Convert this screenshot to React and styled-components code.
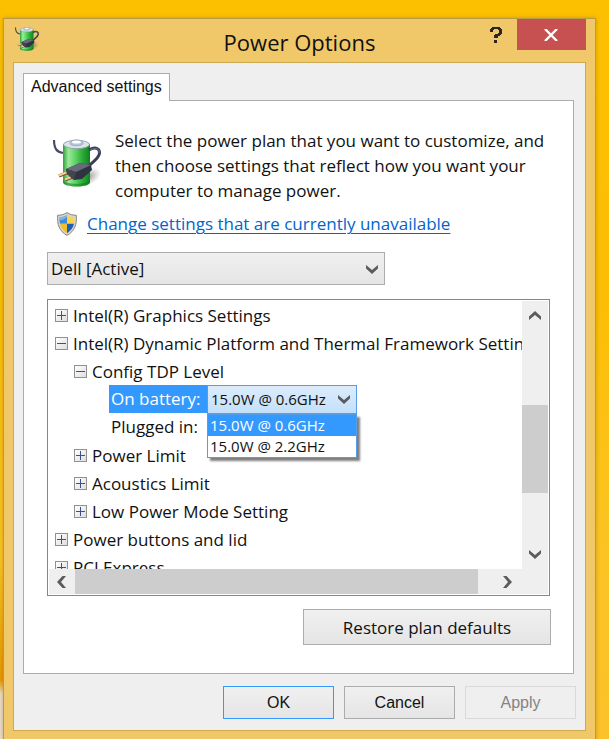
import React, { useState } from "react";
import styled, { createGlobalStyle, css } from "styled-components";

const ui = `"Open Sans", "Noto Sans", sans-serif`;
const classic = `"Liberation Sans", Arial, sans-serif`;

const GlobalStyle = createGlobalStyle`
  * { box-sizing: border-box; }
  html, body { margin: 0; height: 100%; overflow: hidden; }
  body { font-family: ${ui}; font-size: 17px; color: #111; }
  button, select { font: inherit; color: inherit; margin: 0; }
`;

const Desktop = styled.div`
  display: flex;
  min-height: 100vh;
  padding: 18px 13px 0 3px;
  background:
    linear-gradient(to bottom, transparent 560px, #e89800 680px, #eadcc8 694px) left / 3px 100% no-repeat,
    linear-gradient(to bottom, #fdc000 0, #fcbe04 40%, #fbc424 75%, #fbc22a 100%);
`;

const Window = styled.main`
  flex: 1;
  min-width: 0;
  display: flex;
  flex-direction: column;
  padding: 0 9px 9px;
  border: 1px solid #b99a48;
  border-bottom: 0;
  background: #f0c869;
  box-shadow: 0 0 4px rgba(110, 80, 0, 0.35);
`;

const TitleBar = styled.header`
  display: grid;
  grid-template-columns: 1fr auto 1fr;
  height: 43px;
`;

const TitleIcon = styled.div`
  padding: 8px 0 0 2px;
  line-height: 0;
`;

const Title = styled.h1`
  margin: 0;
  font-size: 22px;
  line-height: 46px;
  font-weight: 400;
`;

const Controls = styled.div`
  display: flex;
  justify-content: flex-end;
  align-items: flex-start;
`;

const Control = styled.button`
  display: grid;
  place-items: center;
  width: ${(p) => (p.$close ? "69px" : "42px")};
  height: 31px;
  padding: 0;
  border: 0;
  background: ${(p) => (p.$close ? "#c75050" : "transparent")};
`;

const Client = styled.div`
  flex: 1;
  padding: 10px 9px 0;
  border: 1px solid #cda950;
  background: #efefef;
`;

const TabList = styled.div`
  display: flex;
`;

const Tab = styled.button`
  position: relative;
  z-index: 1;
  height: 28px;
  margin-bottom: -1px;
  padding: 0 7px 2px;
  border: 1px solid #acacac;
  border-bottom: 0;
  background: #fff;
  font-family: ${classic};
  font-size: 16px;
`;

const Panel = styled.section`
  height: 574px;
  margin-right: 2px;
  padding: 27px 23px 0;
  border: 1px solid #acacac;
  background: #fff;
`;

const Intro = styled.div`
  display: grid;
  grid-template-columns: 60px 1fr;
  padding: 0 0 0 6px;
  column-gap: 2px;
`;

const IntroIcon = styled.div`
  padding-top: 11px;
  line-height: 0;
`;

const IntroText = styled.p`
  margin: 0;
  line-height: 25px;
  white-space: pre-line;
`;

const LinkRow = styled.div`
  display: flex;
  align-items: center;
  gap: 10px;
  height: 28px;
  margin-top: 7px;
  padding-left: 10px;
`;

const Link = styled.a`
  color: #0066cc;
  line-height: 24px;
  text-underline-offset: 3px;
  text-decoration-thickness: 1px;
`;

const SelectBox = styled.div`
  display: grid;
  align-items: center;
  width: ${(p) => (p.$compact ? "150px" : "338px")};

  > * { grid-area: 1 / 1; }
  > svg { justify-self: end; margin-right: 7px; pointer-events: none; }
`;

const Select = styled.select`
  appearance: none;
  width: 100%;
  height: 33px;
  padding: 0 24px 0 3px;
  border: 1px solid #acacac;
  border-radius: 0;
  background: linear-gradient(#f0f0f0, #e5e5e5);
  outline: 0;

  ${(p) => p.$compact && css`
    height: 29px;
    font-size: 15px;
    border-color: #569de5;
    background: linear-gradient(#dcecfc, #c4e0fa);
  `}
`;

const Tree = styled.div`
  display: grid;
  grid-template-columns: minmax(0, 1fr) 26px;
  grid-template-rows: 268px 25px;
  height: 297px;
  margin-top: 14px;
  padding: 1px;
  border: 1px solid #828790;
`;

const Rows = styled.ul`
  overflow: hidden;
  margin: 0;
  padding: 0;
  list-style: none;
  white-space: nowrap;
`;

const Row = styled.li`
  display: flex;
  align-items: center;
  height: 28px;
  padding-left: ${(p) => ({ 1: 6, 2: 25, 3: 60 })[p.$level]}px;
`;

const Toggle = styled.button`
  flex: none;
  width: 13px;
  height: 13px;
  margin-right: 5px;
  padding: 0;
  border: 1px solid #919191;
  background: linear-gradient(135deg, #fff, #dedede);
  line-height: 0;
`;

const Setting = styled.label`
  width: 98px;
  padding-left: 2px;
  line-height: 28px;
  ${(p) => p.$selected && css`
    background: #3399ff;
    color: #fff;
  `}
`;

const Combo = styled.div`
  position: relative;
`;

const Menu = styled.div`
  position: absolute;
  z-index: 2;
  top: 100%;
  left: 0;
  right: 0;
  border: 1px solid #569de5;
  background: #fff;
  box-shadow: 3px 3px 2px rgba(0, 0, 0, 0.5);
`;

const Option = styled.button`
  display: block;
  width: 100%;
  height: 21px;
  padding: 0 2px;
  border: 0;
  background: ${(p) => (p.$selected ? "#3399ff" : "#fff")};
  color: ${(p) => (p.$selected ? "#fff" : "#111")};
  font-size: 15px;
  line-height: 21px;
  text-align: left;
`;

const ScrollBar = styled.div`
  display: flex;
  flex-direction: ${(p) => (p.$horizontal ? "row" : "column")};
  background: #efefef;
`;

const ScrollButton = styled.button`
  display: grid;
  place-items: center;
  flex: 0 0 ${(p) => (p.$narrow ? "26px" : "30px")};
  padding: 0;
  border: 0;
  background: transparent;
`;

const Track = styled.div`
  display: flex;
  flex: 1;
  flex-direction: inherit;
`;

const Space = styled.div`
  flex: ${(p) => p.$grow};
`;

const Thumb = styled.div`
  flex: ${(p) => p.$grow};
  background: #cdcdcd;
`;

const Corner = styled.div`
  background: #efefef;
`;

const Button = styled.button`
  width: 111px;
  height: 33px;
  padding: 0;
  border: 1px solid ${(p) => (p.$primary ? "#3399ff" : "#acacac")};
  background: linear-gradient(#f0f0f0, #e5e5e5);
  font-family: ${classic};
  font-size: 16px;

  &:disabled {
    border-color: #d9d9d9;
    background: #efefef;
    color: #838383;
  }
`;

const WideButton = styled(Button)`
  width: 248px;
  height: 36px;
  font-family: ${ui};
  font-size: 17px;
`;

const PanelActions = styled.div`
  display: flex;
  justify-content: flex-end;
  margin: 13px -1px 0 0;
`;

const Footer = styled.footer`
  display: flex;
  justify-content: flex-end;
  gap: 10px;
  padding: 12px 0 11px;
`;

function BatteryIcon({ size, id }) {
  return (
    <svg width={size} height={size} viewBox="0 0 50 50" aria-hidden="true">
      <defs>
        <linearGradient id={`${id}-body`}>
          <stop offset="0" stopColor="#2fa03b" />
          <stop offset=".2" stopColor="#9bea9c" />
          <stop offset=".45" stopColor="#5fd466" />
          <stop offset=".7" stopColor="#2fae3a" />
          <stop offset="1" stopColor="#0f8220" />
        </linearGradient>
        <radialGradient id={`${id}-shade`}>
          <stop offset="0" stopColor="#555" stopOpacity=".6" />
          <stop offset="1" stopColor="#777" stopOpacity="0" />
        </radialGradient>
      </defs>
      <ellipse cx="35" cy="38" rx="14" ry="8" fill={`url(#${id}-shade)`} transform="rotate(-25 35 38)" />
      <path d="M1 1c0 9 3 12 9 13" fill="none" stroke="#454b62" strokeWidth="2.2" />
      <path d="M10 5v38c0 6 27 6 27 0V5z" fill={`url(#${id}-body)`} />
      <path d="M10 41v2c0 6 27 6 27 0v-2c-2 5-25 5-27 0z" fill="#07801a" opacity=".55" />
      <ellipse cx="23.5" cy="5.5" rx="13" ry="4.2" fill="#d9e3e8" stroke="#8795a0" strokeWidth=".8" />
      <path d="M17 4.5c0-5 13-5 13 0 0 3-13 3-13 0z" fill="#b3c3d5" stroke="#8295aa" strokeWidth=".5" />
      <ellipse cx="23.5" cy="3" rx="4.5" ry="1.5" fill="#fff" />
      <path d="M36 11c7-4 12-1 10 5-2 5-6 6-10 11" fill="none" stroke="#383e53" strokeWidth="3" />
      <path d="M37 11c6-3 10-1 9 3" fill="none" stroke="#828aa2" strokeWidth=".7" />
      <path d="M6 37l12-5M12 41l12-5" stroke="#76501f" strokeWidth="3.5" />
      <path d="M6 36.4l12-5M12 40.4l12-5" stroke="#f7cf92" strokeWidth="2.2" />
      <path d="M13 30l14-6 11 2 1 5-10 9-8 1-7-6z" fill="#303342" />
      <path d="M13 30l14-6 11 2-15 7z" fill="#686b7a" />
      <path d="M13 30l10 3-2 8-7-6z" fill="#45454f" />
    </svg>
  );
}

function ShieldIcon() {
  return (
    <svg width="20" height="24" viewBox="0 0 20 24" aria-hidden="true">
      <path d="M10 .6c3 2 6 2.6 9.3 2.7C20 12 18 19 10 23.4 2 19 0 12 .7 3.3 4 3.2 7 2.6 10 .6z" fill="#d6d7d5" stroke="#85847e" />
      <path d="M10 3C7.5 4.5 5 5.1 2.5 5.3c-.1 2.5 0 4.5.5 6.5h7z" fill="#3f8bda" />
      <path d="M10 3c2.5 1.5 5 2.1 7.5 2.3.1 2.5 0 4.5-.5 6.5h-7z" fill="#fbd44c" />
      <path d="M3 11.8c1 4.2 3.4 7.2 7 9.4v-9.4z" fill="#f0bd2d" />
      <path d="M17 11.8c-1 4.2-3.4 7.2-7 9.4v-9.4z" fill="#1b5fbd" />
      <path d="M10 3C7.5 4.5 5 5.1 2.5 5.3l.1 3C6 8 8 7 10 5z" fill="#9fcaf0" opacity=".65" />
    </svg>
  );
}

const turns = { down: 0, left: 90, up: 180, right: 270 };

function Chevron({ to = "down" }) {
  return (
    <svg width="12" height="12" viewBox="0 0 12 12" aria-hidden="true">
      <path d="M0 2l6 5 6-5v3.5L6 11 0 5.5z" fill="#5c5c5c" transform={`rotate(${turns[to]} 6 6)`} />
    </svg>
  );
}

const Branch = ({ level, open, children }) => (
  <Row $level={level}>
    <Toggle type="button" aria-expanded={!!open} aria-label={children}>
      <svg width="11" height="11" viewBox="0 0 11 11" aria-hidden="true">
        <path d={open ? "M1 5.5h9" : "M1 5.5h9M5.5 1v9"} stroke="#3b4f8f" />
      </svg>
    </Toggle>
    {children}
  </Row>
);

const levels = ["15.0W @ 0.6GHz", "15.0W @ 2.2GHz"];

const PlanRow = styled.div`
  margin-top: 14px;
`;

function PlanSelect() {
  return (
    <PlanRow>
      <SelectBox>
        <Select aria-label="Power plan">
          <option>Dell [Active]</option>
        </Select>
        <Chevron />
      </SelectBox>
    </PlanRow>
  );
}

export default function App() {
  const [level, setLevel] = useState(levels[0]);
  return (
    <>
      <GlobalStyle />
      <Desktop>
        <Window>
          <TitleBar>
            <TitleIcon><BatteryIcon size={25} id="title" /></TitleIcon>
            <Title>Power Options</Title>
            <Controls>
              <Control type="button" aria-label="Help">
                <svg width="12" height="16" viewBox="0 0 12 16" aria-hidden="true">
                  <path d="M0 5V2h1V1h1V0h8v1h1v1h1v5h-1v1h-1v1H8v2H4V8h1V7h3V6h1V3H8V2H4v1H3v2zM4 13h3v3H4z" fill="#2a2622" />
                </svg>
              </Control>
              <Control type="button" $close aria-label="Close">
                <svg width="15" height="12" viewBox="0 0 15 12" aria-hidden="true">
                  <path d="M1 0l12 12M13 0L1 12" stroke="#fff" strokeWidth="2.4" />
                </svg>
              </Control>
            </Controls>
          </TitleBar>
          <Client>
            <TabList role="tablist">
              <Tab type="button" role="tab" aria-selected="true">Advanced settings</Tab>
            </TabList>
            <Panel role="tabpanel">
              <Intro>
                <IntroIcon><BatteryIcon size={50} id="intro" /></IntroIcon>
                <IntroText>
                  {"Select the power plan that you want to customize, and\nthen choose settings that reflect how you want your\ncomputer to manage power."}
                </IntroText>
              </Intro>
              <LinkRow>
                <ShieldIcon />
                <Link href="#settings">Change settings that are currently unavailable</Link>
              </LinkRow>
              <PlanSelect />
              <Tree>
                <Rows>
                  <Branch level={1}>Intel(R) Graphics Settings</Branch>
                  <Branch level={1} open>Intel(R) Dynamic Platform and Thermal Framework Settings</Branch>
                  <Branch level={2} open>Config TDP Level</Branch>
                  <Row $level={3}>
                    <Setting htmlFor="battery" $selected>On battery:</Setting>
                    <Combo>
                      <SelectBox $compact>
                        <Select id="battery" $compact value={level} onChange={(e) => setLevel(e.target.value)}>
                          {levels.map((l) => <option key={l}>{l}</option>)}
                        </Select>
                        <Chevron />
                      </SelectBox>
                      <Menu role="listbox" aria-label="On battery">
                        {levels.map((l) => (
                          <Option key={l} type="button" role="option" aria-selected={l === level} $selected={l === level} onClick={() => setLevel(l)}>
                            {l}
                          </Option>
                        ))}
                      </Menu>
                    </Combo>
                  </Row>
                  <Row $level={3}><Setting as="span">Plugged in:</Setting></Row>
                  <Branch level={2}>Power Limit</Branch>
                  <Branch level={2}>Acoustics Limit</Branch>
                  <Branch level={2}>Low Power Mode Setting</Branch>
                  <Branch level={1}>Power buttons and lid</Branch>
                  <Branch level={1}>PCI Express</Branch>
                </Rows>
                <ScrollBar>
                  <ScrollButton type="button" aria-label="Scroll up"><Chevron to="up" /></ScrollButton>
                  <Track><Space $grow={74} /><Thumb $grow={88} /><Space $grow={46} /></Track>
                  <ScrollButton type="button" aria-label="Scroll down"><Chevron /></ScrollButton>
                </ScrollBar>
                <ScrollBar $horizontal>
                  <ScrollButton type="button" $narrow aria-label="Scroll left"><Chevron to="left" /></ScrollButton>
                  <Track><Thumb $grow={404} /><Space $grow={14} /></Track>
                  <ScrollButton type="button" aria-label="Scroll right"><Chevron to="right" /></ScrollButton>
                </ScrollBar>
                <Corner />
              </Tree>
              <PanelActions><WideButton type="button">Restore plan defaults</WideButton></PanelActions>
            </Panel>
            <Footer>
              <Button type="button" $primary>OK</Button>
              <Button type="button">Cancel</Button>
              <Button type="button" disabled>Apply</Button>
            </Footer>
          </Client>
        </Window>
      </Desktop>
    </>
  );
}
